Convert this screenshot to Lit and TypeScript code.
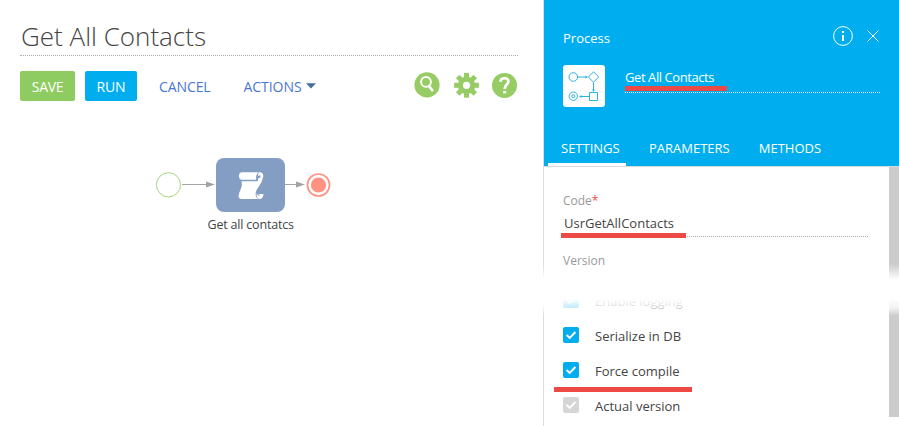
import { LitElement, html, css, svg } from "lit";
import { customElement, property } from "lit/decorators.js";

@customElement("check-row")
class CheckRow extends LitElement {
  @property() label = "";
  @property({ type: Boolean, reflect: true }) disabled = false;

  static styles = css`
    :host { display: flex; align-items: center; height: 35px; gap: 16px; }
    .box { width: 16px; height: 16px; border-radius: 2px; background: #00aeef; display: block; margin-top: -2px; }
    :host([disabled]) .box { background: #d6d6d6; }
    .label { font-size: 13px; line-height: 18px; color: #444; white-space: nowrap; }
  `;

  render() {
    return html`
      <svg class="box" viewBox="0 0 16 16"><path d="M3.6 8.1 6.7 10.9 12.4 5" fill="none" stroke="#fff" stroke-width="2" /></svg>
      <span class="label">${this.label}</span>
    `;
  }
}

@customElement("process-canvas")
class ProcessCanvas extends LitElement {
  static styles = css`
    :host { display: block; height: 325px; }
    svg { display: block; }
    .caption { font: 12.5px "Open Sans", sans-serif; fill: #444; }
  `;

  private arrow(from: number, to: number) {
    return svg`
      <path d="M${from} 83.5H${to - 8}" stroke="#a3a3a3" />
      <path d="M${to - 9} 80.5 ${to} 83.5 ${to - 9} 86.5z" fill="#a3a3a3" />`;
  }

  render() {
    return html`
      <svg width="543" height="325" viewBox="0 0 543 325">
        <circle cx="168.5" cy="83.8" r="12.1" fill="#fff" stroke="#a5d67c" />
        ${this.arrow(182, 215)}
        <rect x="216" y="57" width="69" height="54" rx="8" fill="#839dc3" />
        <g fill="#fff">
          <path d="M242 71.3H259C256.6 72.6 255.8 75 256.2 78.8H242C237.8 78.8 237.8 71.3 242 71.3z" />
          <path d="M241.5 80.2H257.4C258.2 80.2 258.3 78 258.3 77H262.6C262 83.5 255.6 87.5 255.6 93C255.6 95.8 257 97.4 259 98H241.8C237.4 98 238.4 93.5 240 90C241.4 87 242.4 84 241.5 80.2z" />
          <path d="M260 71.3C264 71.3 264 76.8 261.8 78H258.4C259.4 76.7 261 76.6 260.6 75C260.2 74 258.8 74.2 258 75.2C257.9 73 258.6 71.3 260 71.3z" />
          <path d="M258.2 93H263.6C263.4 96 261.8 98 259.6 98C257.2 97.4 256.2 94.5 256.6 92C257.2 94.5 258.8 95.4 260 94.4z" />
        </g>
        ${this.arrow(285, 305)}
        <circle cx="318.5" cy="84" r="11" fill="#fff" stroke="#ff9280" stroke-width="1.7" />
        <circle cx="318.5" cy="84" r="7.6" fill="#ff9280" />
        <text class="caption" x="207.5" y="128" textLength="86.5">Get all contatcs</text>
      </svg>
    `;
  }
}

@customElement("app-root")
class AppRoot extends LitElement {
  static styles = css`
    :host { display: flex; width: 899px; height: 426px; overflow: hidden; background: #fff;
      font-family: "Open Sans", sans-serif; font-size: 13px; color: #444; }
    * { box-sizing: border-box; }
    svg { display: block; }
    .main { width: 543px; }
    .title { height: 56px; margin: 0 25px 0 20px; padding: 18px 0 0 1px; font-size: 26px; line-height: 36px;
      font-weight: 300; border-bottom: 1px dotted #aaa; color: #444; }
    .toolbar { display: flex; align-items: center; height: 30px; margin: 15px 25px 0 20px; font-size: 14px; color: #4a77d4; }
    .btn { height: 30px; border-radius: 2px; line-height: 31px; text-align: center; color: #fff; }
    .save { width: 55px; background: #8ecb60; letter-spacing: -.35px; }
    .run { width: 52px; margin-left: 10px; background: #00aeef; letter-spacing: -.2px; }
    .cancel { margin-left: 22px; width: 84.5px; letter-spacing: -.1px; padding-top: 1px; }
    .actions { letter-spacing: -.05px; padding-top: 1px; width: 62.5px; }
    .icons { display: flex; margin-left: auto; gap: 13px; margin-top: -2px; }
    .panel { position: relative; width: 356px; border-left: 1px solid #ddd; }
    .head { height: 167px; background: #00aeef; color: #fff; border-bottom: 1px solid #d5dadd; }
    .top { display: flex; align-items: center; height: 65px; padding: 11px 20px 0 19px; }
    .top .info { margin-left: auto; margin-top: -4px; }
    .top .close { margin-left: 14px; margin-top: -4px; }
    .identity { display: flex; gap: 20px; padding-left: 19px; height: 62px; }
    .tile { width: 42px; height: 42px; background: #fff; border-radius: 3px; }
    .name { width: 255px; height: 28px; padding-top: 3px; line-height: 18px; letter-spacing: -.42px; border-bottom: 1px dotted #fff; }
    .tabs { display: flex; height: 39px; padding-left: 4px; }
    .tab { padding: 12px 0 0 13px; line-height: 18px; }
    .tab.on { width: 78px; border-bottom: 3px solid #fff; }
    .parameters { margin-left: 10px; }
    .methods { margin-left: 16px; }
    .body { display: flex; height: 259px; }
    .fields { width: 345px; padding: 25px 0 0 19px; }
    .caption { color: #999; font-size: 12px; line-height: 18px; }
    .req { color: #ee4a45; }
    .value { width: 305px; height: 27px; padding: 4px 0 0 1px; line-height: 18px; border-bottom: 1px dotted #aaa; }
    .version { margin-top: 15px; }
    .checks { margin-top: 13px; }
    .scroll { width: 10px; height: 250px; background: #ccc; }
    .fade { position: absolute; left: -1px; right: 0; top: 264px; height: 52px;
      background: linear-gradient(rgba(255,255,255,0), #fff 16px, #fff 35px, rgba(255,255,255,.75) 44px, rgba(255,255,255,0)); }
    .mark { position: absolute; height: 5px; background: #ee4a45; }
    .mark.m1 { left: 81px; top: 86px; width: 102px; }
    .mark.m2 { left: 17px; top: 233px; width: 125px; }
    .mark.m3 { left: 10px; top: 387px; width: 138px; }
  `;

  render() {
    return html`
      <section class="main">
        <div class="title">Get All Contacts</div>
        <div class="toolbar">
          <div class="btn save">SAVE</div>
          <div class="btn run">RUN</div>
          <span class="cancel">CANCEL</span>
          <span class="actions">ACTIONS</span>
          <svg width="10" height="6" viewBox="0 0 10 6"><path d="M0 .3H10L5 5.5z" fill="#496e9d" /></svg>
          <div class="icons">
            <svg width="26" height="26" viewBox="0 0 26 26">
              <circle cx="13" cy="12.9" r="12.6" fill="#96cc63" />
              <circle cx="12" cy="9.9" r="4.9" fill="none" stroke="#fff" stroke-width="2" />
              <path d="M14.7 13.6 19 19.3" stroke="#fff" stroke-width="2.6" />
            </svg>
            <svg width="26" height="26" viewBox="-13.5 -13.3 26 26">
              <circle r="8.7" fill="#96cc63" />
              <g fill="#96cc63">
                ${[0, 45, 90, 135].map((a) => svg`<rect x="-2.5" y="-12.4" width="5" height="24.8" transform="rotate(${a})" />`)}
              </g>
              <circle r="3.6" fill="#fff" />
            </svg>
            <svg width="26" height="26" viewBox="0 0 26 26">
              <circle cx="12.5" cy="13.4" r="12.5" fill="#96cc63" />
              <path d="M8.4 9.8C8.6 5 16.4 5.2 16.4 9.4C16.4 12.4 12.7 12.6 12.7 16.9" fill="none" stroke="#fff" stroke-width="2.7" />
              <rect x="11.2" y="18.9" width="3" height="2.6" fill="#fff" />
            </svg>
          </div>
        </div>
        <process-canvas></process-canvas>
      </section>
      <aside class="panel">
        <header class="head">
          <div class="top">
            <span>Process</span>
            <svg class="info" width="20" height="20" viewBox="0 0 20 20">
              <circle cx="10" cy="10" r="9.4" fill="none" stroke="#fff" />
              <path d="M9 5h2v2H9zM9 9h2v6H9z" fill="#fff" />
            </svg>
            <svg class="close" width="12" height="12" viewBox="0 0 12 12"><path d="M.5.5 11.5 11.5M11.5.5.5 11.5" stroke="#fff" /></svg>
          </div>
          <div class="identity">
            <svg class="tile" viewBox="0 0 42 42" fill="none" stroke="#2db2e2">
              <circle cx="10.3" cy="12" r="4.3" />
              <path d="M30.5 6.8 35.8 12 30.5 17.2 25.3 12zM15 12H24M30.5 17.5V26M26.5 27.5H34.5V35.5H26.5zM26 31.5H17" />
              <circle cx="10.3" cy="31.2" r="4.2" /><circle cx="10.3" cy="31.2" r="1.5" />
              <path d="M22.5 10.5 25 12 22.5 13.5zM29 24.5H32L30.5 27zM18.5 29.9 16 31.4 18.5 32.9z" fill="#2db2e2" stroke="none" />
            </svg>
            <div class="name">Get All Contacts</div>
          </div>
          <nav class="tabs">
            <div class="tab on">SETTINGS</div>
            <div class="tab parameters">PARAMETERS</div>
            <div class="tab methods">METHODS</div>
          </nav>
        </header>
        <div class="body">
          <div class="fields">
            <div class="caption">Code<span class="req">*</span></div>
            <div class="value">UsrGetAllContacts</div>
            <div class="caption version">Version</div>
            <div class="checks">
              <check-row label="Enable logging"></check-row>
              <check-row label="Serialize in DB"></check-row>
              <check-row label="Force compile"></check-row>
              <check-row label="Actual version" disabled></check-row>
            </div>
          </div>
          <div class="scroll"></div>
        </div>
        <div class="fade"></div>
        <div class="mark m1"></div>
        <div class="mark m2"></div>
        <div class="mark m3"></div>
      </aside>
    `;
  }
}
